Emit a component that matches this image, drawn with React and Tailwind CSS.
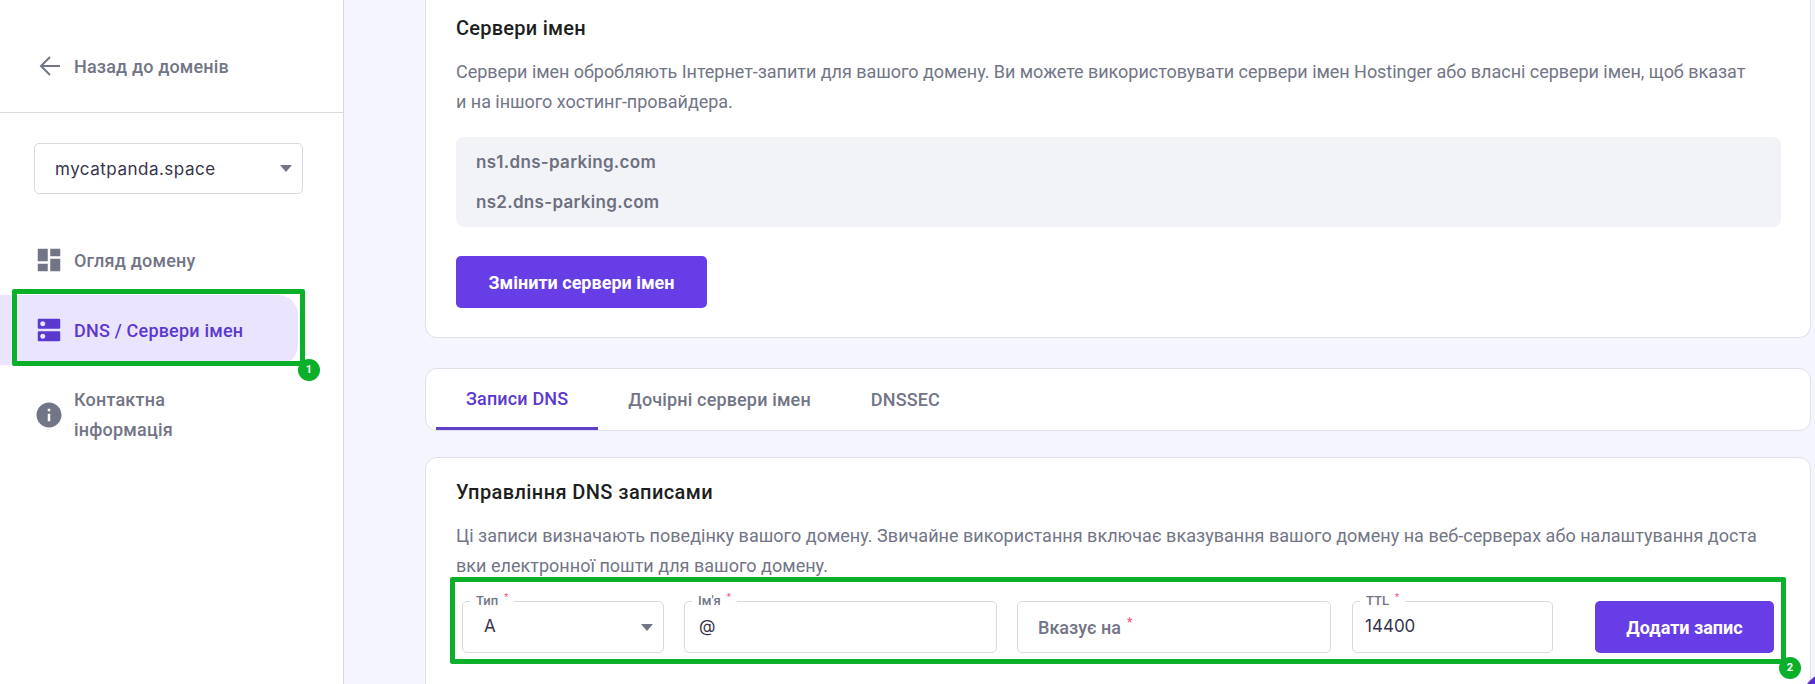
// Hostinger-style DNS settings page with two green annotation frames on top.

const ROBOTO = "font-['Roboto',sans-serif]";
const GEO = "font-['Inter',sans-serif]";

function Caret({ className }) {
  return (
    <svg width="12" height="7" viewBox="0 0 12 7" className={className}>
      <path d="M0 0h12L6 7z" fill="#727586" />
    </svg>
  );
}

function MatIcon({ d, className }) {
  return (
    <svg width="30" height="30" viewBox="0 0 24 24" fill="currentColor" className={className}>
      <path d={d} />
    </svg>
  );
}

const DASHBOARD = "M3 13h8V3H3v10zm0 8h8v-6H3v6zm10 0h8V11h-8v10zm0-18v6h8V3h-8z";
const DNS =
  "M20 13H4c-.55 0-1 .45-1 1v6c0 .55.45 1 1 1h16c.55 0 1-.45 1-1v-6c0-.55-.45-1-1-1zM7 19c-1.1 0-2-.9-2-2s.9-2 2-2 2 .9 2 2-.9 2-2 2zM20 3H4c-.55 0-1 .45-1 1v6c0 .55.45 1 1 1h16c.55 0 1-.45 1-1V4c0-.55-.45-1-1-1zM7 9c-1.1 0-2-.9-2-2s.9-2 2-2 2 .9 2 2-.9 2-2 2z";
const INFO =
  "M12 2C6.48 2 2 6.48 2 12s4.48 10 10 10 10-4.48 10-10S17.52 2 12 2zm1 15h-2v-6h2v6zm0-8h-2V7h2v2z";

function Badge({ n, className }) {
  return (
    <span
      className={
        "absolute w-[22px] h-[22px] rounded-full bg-[#0ab02a] text-white text-[11px] font-bold flex items-center justify-center font-['Roboto',sans-serif] " +
        className
      }
    >
      {n}
    </span>
  );
}

function Sidebar() {
  return (
    <aside className={"relative w-[344px] shrink-0 bg-white border-r border-[#d8dae0] " + ROBOTO}>
      <div className="h-[113px] border-b border-[#d8dae0] flex items-center pl-[39px] pt-[20px] text-[#727586]">
        <svg width="22" height="22" viewBox="0 0 22 22" fill="none" stroke="currentColor" strokeWidth="2">
          <path d="M21 11H2M11 2l-9 9 9 9" />
        </svg>
        <span className="ml-[13px] text-[18px] font-medium tracking-[0.15px]">Назад до доменів</span>
      </div>

      <div className={"mt-[30px] ml-[34px] w-[269px] h-[51px] border border-[#d8dae0] rounded-[5px] flex items-center justify-between pl-[20px] pr-[10px] text-[17px] tracking-[0.5px] " + GEO}>
        <span className="mt-[2px] text-[#36344d]">mycatpanda.space</span>
        <Caret />
      </div>

      <nav className="mt-[41px] text-[18px] font-medium tracking-[0.2px] text-[#727586]">
        <div className="h-[50px] flex items-center pl-[34px] gap-[10px]">
          <MatIcon d={DASHBOARD} />
          <span>Огляд домену</span>
        </div>
        <div className="mt-[10px] w-[298px] h-[70px] bg-[#ebe4ff] rounded-r-[20px] flex items-center pl-[34px] gap-[10px] text-[#5b39cf]">
          <MatIcon d={DNS} />
          <span>DNS / Сервери імен</span>
        </div>
        <div className="mt-[20px] flex items-center pl-[34px] gap-[10px]">
          <MatIcon d={INFO} />
          <span className="leading-[30px]">
            Контактна
            <br />
            інформація
          </span>
        </div>
      </nav>

      <div className="absolute left-[12px] top-[289px] w-[293px] h-[77px] border-[5px] border-[#0ab02a] rounded-[2px]" />
      <Badge n="1" className="left-[298px] top-[359px]" />
    </aside>
  );
}

function Field({ label, value, width, caret, valueClass }) {
  return (
    <div className={"relative h-[52px] border border-[#d8dae0] rounded-[5px] flex items-center justify-between " + width}>
      <span className={"text-[17px] text-[#36344d] " + GEO + " " + valueClass}>{value}</span>
      {caret && <Caret className="mr-[10px]" />}
      <span className="absolute left-[7px] -top-[10px] bg-white px-[6px] text-[13px] font-medium text-[#727586] leading-[18px]">
        {label}
        <span className="relative -top-[5px] ml-[6px] text-[#fc5185] text-[9px]">*</span>
      </span>
    </div>
  );
}

function Main() {
  return (
    <main className={"relative flex-1 min-w-0 bg-[#f4f5ff] pl-[81px] pr-[4px] " + ROBOTO}>
      <section className="h-[338px] bg-white border border-t-0 border-[#dfe1ea] rounded-b-[12px] pt-[17px] px-[30px]">
        <h2 className="text-[20px] leading-[22px] font-medium tracking-[0.25px] text-[#1d1e20]">Сервери імен</h2>
        <p className="mt-[18px] text-[18px] leading-[30px] tracking-[-0.036px] text-[#727586] whitespace-nowrap">
          Сервери імен обробляють Інтернет-запити для вашого домену. Ви можете використовувати сервери імен Hostinger або власні сервери імен, щоб вказат
          <br />
          и на іншого хостинг-провайдера.
        </p>
        <div className={"mt-[20px] h-[90px] w-[1325px] rounded-[8px] bg-[#f2f3f6] py-[5px] pl-[20px] text-[17px] font-semibold tracking-[0.3px] leading-[40px] text-[#6d7081] " + GEO}>
          <div>ns1.dns-parking.com</div>
          <div>ns2.dns-parking.com</div>
        </div>
        <button className="mt-[29px] h-[52px] w-[251px] rounded-[5px] bg-[#673de6] text-[18px] font-bold text-white">
          Змінити сервери імен
        </button>
      </section>

      <div className="mt-[30px] h-[63px] bg-white border border-[#dfe1ea] rounded-[12px] pl-[10px] flex text-[18px] font-medium tracking-[0.15px] text-[#727586]">
        <div className="px-[30px] flex items-center border-b-[3px] border-[#5f3fc6] text-[#5b39cf]">Записи DNS</div>
        <div className="px-[30px] flex items-center">Дочірні сервери імен</div>
        <div className="px-[30px] flex items-center">DNSSEC</div>
      </div>

      <section className="mt-[26px] h-[300px] bg-white border border-[#dfe1ea] rounded-[12px] pt-[23px] px-[30px]">
        <h2 className="text-[20px] leading-[22px] font-medium tracking-[0.4px] text-[#1d1e20]">Управління DNS записами</h2>
        <p className="mt-[18px] text-[18px] leading-[30px] tracking-[0.02px] text-[#727586] whitespace-nowrap">
          Ці записи визначають поведінку вашого домену. Звичайне використання включає вказування вашого домену на веб-серверах або налаштування доста
          <br />
          вки електронної пошти для вашого домену.
        </p>
        <div className="mt-[20px] ml-[6px] flex">
          <Field label="Тип" value="A" width="w-[202px]" caret valueClass="pl-[21px]" />
          <Field label="Ім'я" value="@" width="ml-[20px] w-[313px]" valueClass="pl-[14px]" />
          <div className="ml-[20px] w-[314px] h-[52px] border border-[#d8dae0] rounded-[5px] flex items-center pl-[20px] text-[18px] font-medium tracking-[0.02px] text-[#727586]">
            Вказує на
            <span className="ml-[6px] -mt-[10px] text-[#fc5185] text-[12px]">*</span>
          </div>
          <Field label="TTL" value="14400" width="ml-[21px] w-[201px]" valueClass="pl-[12px]" />
          <button className="ml-[42px] w-[179px] h-[52px] rounded-[5px] bg-[#673de6] text-[18px] font-bold text-white">
            Додати запис
          </button>
        </div>
      </section>

      <div className="absolute left-[106px] top-[577px] w-[1336px] h-[87px] border-[5px] border-[#0ab02a] rounded-[2px]" />
      <Badge n="2" className="left-[1435px] top-[657px]" />
      <div className="absolute left-[1456px] top-[670px] w-[70px] h-[70px] rounded-full bg-[#5b2fd6]" />
    </main>
  );
}

export default function App() {
  return (
    <div className="flex h-[684px] w-[1815px] overflow-hidden">
      <Sidebar />
      <Main />
    </div>
  );
}
